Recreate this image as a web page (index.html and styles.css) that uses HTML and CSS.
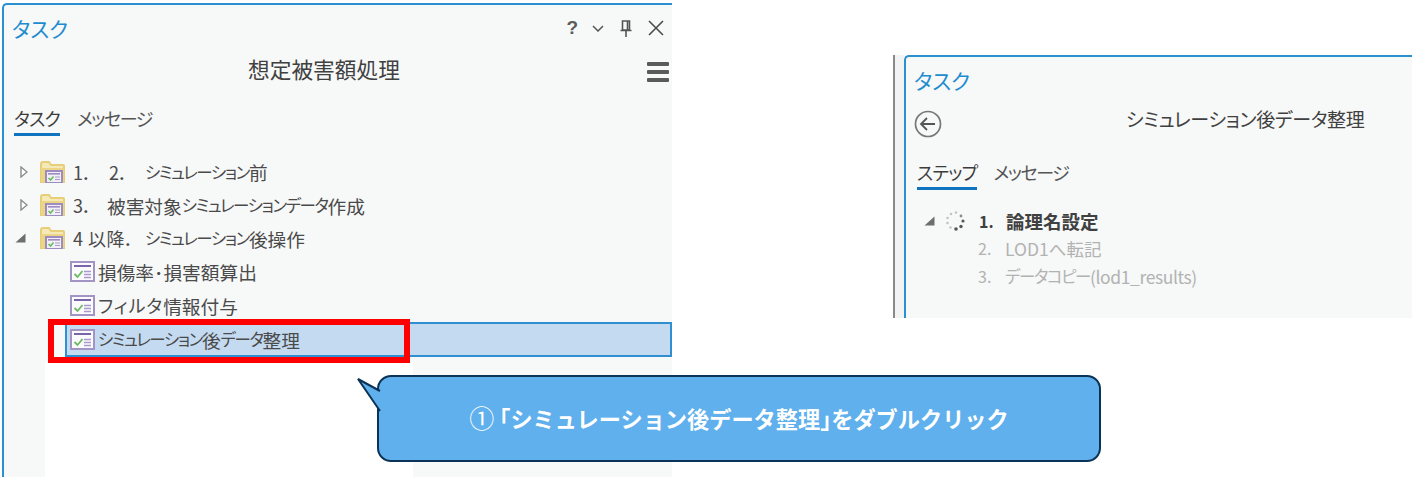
FILE: index.html
```html
<!DOCTYPE html>
<html lang="ja">
<head>
  <meta charset="UTF-8" />
  <title>タスク</title>
  <link rel="stylesheet" href="styles.css">
</head>
<body>
  <svg class="defs" width="0" height="0">
    <symbol id="task" viewBox="0 0 25 21">
      <rect x="1" y="1" width="23" height="19" fill="#fbfafc" stroke="#a394c6" stroke-width="2"/>
      <rect x="4" y="4" width="17" height="2" fill="#7a65a8"/>
      <path d="M4.500 13 L7.500 16 L12.500 10" fill="none" stroke="#6cba62" stroke-width="1.800"/>
      <path d="M14 10.500 H21 M14 13.500 H21 M14 16.500 H21" stroke="#a99bc9" stroke-width="1.300"/>
    </symbol>
    <symbol id="folder" viewBox="0 0 25 22">
      <path d="M1 21 V3 Q1 1 3 1 H9 L11 4 H23 Q24 4 24 5 V21 Z" fill="#f6e9b8" stroke="#e6cf78" stroke-width="2"/>
      <rect x="1" y="7" width="23" height="14" fill="#ecd583"/>
      <rect x="6" y="10" width="16" height="12" fill="#f2f0f7" stroke="#9c8cc2" stroke-width="2"/>
      <rect x="8" y="12" width="12" height="1.600" fill="#9c8cc2"/>
      <path d="M8.500 17 L10.500 19 L13.500 15.500" fill="none" stroke="#6cba62" stroke-width="1.600"/>
      <path d="M15 16 H20 M15 18.500 H20" stroke="#a99bc9" stroke-width="1.200"/>
    </symbol>
    <symbol id="closed" viewBox="0 0 8 12">
      <path d="M1 1 L7 6 L1 11 Z" fill="#fff" stroke="#8c8c8c" stroke-width="1.400"/>
    </symbol>
    <symbol id="open" viewBox="0 0 11 10">
      <path d="M10.500 0.500 V9.500 H0.500 Z" fill="#6e6e6e"/>
    </symbol>
  </svg>

  <section class="panel panel-left">
    <header class="panel-title">
      <h1>タスク</h1>
      <div class="win-tools">
        <span class="tool-help">?</span>
        <svg class="tool-chevron" width="12" height="7" viewBox="0 0 12 7"><path d="M1 1 L6 6 L11 1" fill="none" stroke="#555" stroke-width="1.500"/></svg>
        <svg width="12" height="17" viewBox="0 0 12 17"><path d="M2.500 1 H9.500 V10 H2.500 Z M0.500 10.500 H11.500 M6 11 V17 M7.500 1 V10" fill="none" stroke="#555" stroke-width="1.600"/></svg>
        <svg width="16" height="16" viewBox="0 0 16 16"><path d="M1 1 L15 15 M15 1 L1 15" stroke="#4d4d4d" stroke-width="1.600"/></svg>
      </div>
    </header>
    <div class="subtitle-row">
      <h2>想定被害額処理</h2>
      <div class="hamburger"><i></i><i></i><i></i></div>
    </div>
    <nav class="tabs">
      <span class="tab active">タスク</span>
      <span class="tab">メッセージ</span>
    </nav>
    <ul class="tree">
      <li class="row"><svg class="twisty" width="8" height="12"><use href="#closed"/></svg><svg class="folder" width="25" height="22"><use href="#folder"/></svg><span class="num-wide">1．</span><span class="num-wide">2．</span><span class="kana">シミュレーション</span>前</li>
      <li class="row"><svg class="twisty" width="8" height="12"><use href="#closed"/></svg><svg class="folder" width="25" height="22"><use href="#folder"/></svg><span class="num-wide">3．</span>被害対象<span class="kana">シミュレーションデータ</span>作成</li>
      <li class="row"><svg class="twisty open" width="11" height="10"><use href="#open"/></svg><svg class="folder" width="25" height="22"><use href="#folder"/></svg><span class="num-long">4 以降．</span><span class="kana">シミュレーション</span>後操作</li>
      <li class="row task-row"><svg class="task" width="25" height="21"><use href="#task"/></svg>損傷率･損害額算出</li>
      <li class="row task-row"><svg class="task" width="25" height="21"><use href="#task"/></svg><span class="kana-wide">フィルタ</span>情報付与</li>
      <li class="row task-row selected"><svg class="task" width="25" height="21"><use href="#task"/></svg><span class="kana">シミュレーション</span>後<span class="kana">データ</span>整理</li>
    </ul>
    <div class="patch"></div>
    <div class="highlight"></div>
  </section>

  <section class="panel panel-right">
    <header class="panel-title">
      <h1>タスク</h1>
    </header>
    <div class="subtitle-row">
      <svg class="back" width="28" height="28" viewBox="0 0 28 28">
        <circle cx="14" cy="14" r="12.500" fill="none" stroke="#777" stroke-width="1.700"/>
        <path d="M21 14 H7.500 M13 8 L7 14 L13 20" fill="none" stroke="#555" stroke-width="1.800"/>
      </svg>
      <h2>シミュレーション後データ整理</h2>
    </div>
    <nav class="tabs">
      <span class="tab active strong">ステップ</span>
      <span class="tab">メッセージ</span>
    </nav>
    <ol class="steps">
      <li class="step current">
        <svg class="twisty open" width="11" height="10"><use href="#open"/></svg>
        <svg class="spinner" width="22" height="22" viewBox="0 0 22 22">
          <g fill="#555">
            <circle cx="19" cy="11" r="1.600"/>
            <circle cx="17" cy="16.500" r="1.700"/>
            <circle cx="12" cy="19" r="1.800"/>
          </g>
          <g fill="#c4c4c4">
            <circle cx="6.500" cy="17.500" r="1.300"/>
            <circle cx="3.500" cy="13" r="1.300"/>
            <circle cx="3.500" cy="8" r="1.300"/>
            <circle cx="7" cy="4" r="1.300"/>
            <circle cx="12" cy="2.500" r="1.300"/>
          </g>
          <circle cx="17" cy="6" r="1.400" fill="#8a8a8a"/>
        </svg>
        <span class="step-num">1.</span>論理名設定
      </li>
      <li class="step"><span class="step-num">2.</span>LOD1へ転記</li>
      <li class="step"><span class="step-num">3.</span><span class="kana">データコピー</span><span class="latin">(lod1_results)</span></li>
    </ol>
  </section>

  <div class="callout">
    <svg class="callout-tail" width="26" height="40" viewBox="0 0 26 40">
      <path d="M24 14 L2 2 L24 34" fill="#5fb0ec" stroke="#0b3355" stroke-width="2"/>
    </svg>
    <p><span class="circled">①</span> <span class="bracket">「</span>シミュレーション後データ整理<span class="bracket">」</span>をダブルクリック</p>
  </div>
</body>
</html>
```

FILE: styles.css
```css
html, body {
  margin: 0;
  padding: 0;
  background-color: #ffffff;
  font-family: "Noto Sans CJK JP", "Noto Sans", sans-serif;
  color: #4a4a4a;
}

body {
  position: relative;
  width: 1412px;
  height: 483px;
  overflow: hidden;
}

h1, h2, p, ul, ol {
  margin: 0;
  padding: 0;
  font-weight: 400;
  list-style: none;
}

.defs {
  position: absolute;
}

/* the two pasted windows */
.panel {
  position: absolute;
  box-sizing: border-box;
  background-color: #f7f8f8;
  border-top: 2px solid #2a90d0;
  border-left: 2px solid #2a90d0;
  border-top-left-radius: 5px;
  font-feature-settings: "palt";
}

.panel-left {
  left: 2px;
  top: 3px;
  width: 670px;
  height: 474px;
}

.panel-right {
  left: 904px;
  top: 55px;
  width: 508px;
  height: 263px;
}

.panel-right::before {
  content: "";
  position: absolute;
  left: -13px;
  top: -2px;
  bottom: 0;
  width: 9px;
  background-color: #f3f3f3;
  border-left: 2px solid #8a8a8a;
}

.panel-title {
  display: flex;
  align-items: center;
  justify-content: space-between;
  height: 46px;
  padding-left: 8px;
}

.panel-title h1 {
  font-size: 21px;
  color: #1e8ccf;
}

.win-tools {
  display: flex;
  align-items: center;
  gap: 16px;
  padding-right: 8px;
}

.tool-help {
  font-family: "Liberation Sans", sans-serif;
  font-size: 19px;
  font-weight: 700;
  color: #5c5c5c;
}

.tool-chevron {
  margin-left: -2px;
}

.subtitle-row {
  display: flex;
  align-items: center;
  height: 42px;
  position: relative;
}

.subtitle-row h2 {
  font-size: 21.700px;
  color: #404040;
  margin-left: 244px;
  margin-top: -8px;
}

.hamburger {
  display: flex;
  flex-direction: column;
  gap: 4px;
  width: 22px;
  margin-left: auto;
  margin-right: 3px;
}

.hamburger i {
  display: block;
  height: 4px;
  border-radius: 1px;
  background-color: #5a5a5a;
}

.tabs {
  display: flex;
  gap: 17px;
  padding-left: 10px;
  margin-top: 13px;
}

.tab {
  font-size: 18px;
  line-height: 24px;
  height: 27px;
  letter-spacing: -1.400px;
  color: #555;
}

.tab.active {
  color: #3c3c3c;
  letter-spacing: -0.700px;
  border-bottom: 3px solid #0f74c0;
}

.tree {
  margin-top: 19px;
  position: relative;
}

.row {
  display: flex;
  align-items: center;
  box-sizing: border-box;
  height: 33.400px;
  font-size: 18.700px;
  white-space: nowrap;
  color: #4a4a4a;
}

.kana {
  font-size: 16.500px;
  letter-spacing: -1.400px;
}

.kana-wide {
  font-size: 18px;
  letter-spacing: 1px;
}

.twisty {
  flex: none;
  margin-left: 16px;
  margin-right: 12px;
}

.twisty.open {
  margin-left: 11px;
  margin-right: 14px;
}

.folder {
  flex: none;
  margin-right: 8px;
}

.num-wide {
  display: inline-block;
  width: 36px;
  font-size: 18px;
}

.row:nth-child(2) .num-wide {
  width: 34px;
}

.num-long {
  display: inline-block;
  width: 72px;
  font-size: 18px;
  letter-spacing: 0.500px;
}

.task-row {
  padding-left: 66px;
}

.task {
  flex: none;
  margin-right: 3px;
}

.selected {
  height: 35px;
  margin-left: 61px;
  padding-left: 3px;
  background-color: #c3daf0;
  border: 2px solid #2f8fd0;
}

.patch {
  position: absolute;
  left: 41px;
  top: 358px;
  width: 368px;
  height: 114px;
  background-color: #ffffff;
}

.highlight {
  position: absolute;
  left: 44px;
  top: 314px;
  width: 350px;
  height: 32px;
  border: 6px solid #ff0000;
}

/* right window steps */
.steps {
  margin-top: 17px;
}

.step {
  display: flex;
  align-items: center;
  height: 28px;
  padding-left: 72px;
  font-size: 17.500px;
  color: #b2b2b2;
  white-space: nowrap;
}

.step-num {
  display: inline-block;
  width: 27px;
  font-size: 16px;
}

.latin {
  letter-spacing: -0.400px;
}

.step.current {
  height: 27px;
  padding-left: 0;
  font-size: 18.500px;
  font-weight: 700;
  color: #404040;
}

.step.current .twisty {
  margin-left: 18px;
  margin-right: 9px;
}

.spinner {
  flex: none;
  margin-right: 13px;
}

.back {
  flex: none;
  margin-left: 8px;
}

.panel-right .subtitle-row h2 {
  font-size: 19px;
  letter-spacing: -0.300px;
  margin-left: 184px;
  margin-top: -11px;
}

.panel-right .tabs {
  gap: 16px;
  margin-top: 15px;
  padding-left: 11px;
}

/* annotation */
.callout {
  position: absolute;
  left: 377px;
  top: 375px;
  width: 724px;
  height: 87px;
  box-sizing: border-box;
  background-color: #5fb0ec;
  border: 2px solid #0b3355;
  border-radius: 14px;
  display: flex;
  align-items: center;
  justify-content: center;
}

.callout p {
  color: #ffffff;
  font-size: 22.200px;
  font-weight: 700;
  white-space: nowrap;
  margin-top: -2px;
}

.circled {
  font-size: 25px;
  font-weight: 400;
  line-height: 1;
}

.callout-tail {
  position: absolute;
  left: -23px;
  top: 0;
}

.bracket {
  font-feature-settings: "halt";
}
```
